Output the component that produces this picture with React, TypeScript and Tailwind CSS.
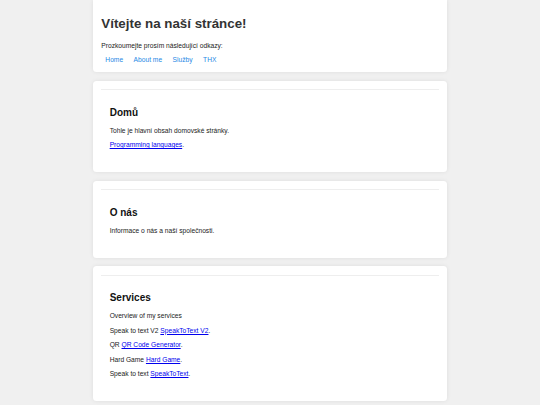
const Card = ({ title, children }: { title: string; children: React.ReactNode }) => (
    <div className="bg-white rounded-[3.5px] shadow-[0_0_4px_rgba(0,0,0,0.08)] p-[8.33px]">
        <hr className="border-t border-[#eeeeee]" />
        <section className="px-[8.33px] pt-[8.33px] pb-[15px]">
            <h2 className="mt-[8.3px] mb-[8.3px] text-[10px] leading-[1.15] font-bold text-[#111]">{title}</h2>
            <div className="flex flex-col gap-[6.9px]">{children}</div>
        </section>
    </div>
);

const Link = ({ children }: { children: React.ReactNode }) => (
    <a href="#" className="text-[#0000ee] underline">{children}</a>
);

const App = () => {
    const links = ['Home', 'About me', 'Služby', 'THX'];

    return (
        <div className="min-h-screen bg-[#f0f0f0] text-[6.67px] leading-[1.15] text-[#222]" style={{ fontFamily: '"Liberation Sans", Arial, sans-serif' }}>
            <div className="w-[354px] mx-auto flex flex-col gap-[8.8px] pb-[8px]">
                {/* hlavička */}
                <header className="bg-white rounded-b-[3.5px] shadow-[0_0_4px_rgba(0,0,0,0.08)] px-[8.33px] pt-[16.3px] pb-[8.33px]">
                    <h1 className="text-[13.33px] leading-[1.15] font-bold text-[#333]">Vítejte na naší stránce!</h1>
                    <p className="mt-[10.4px] text-[#222]">Prozkoumejte prosím následující odkazy:</p>
                    <nav className="flex gap-[10.5px] ml-[4px] mt-[6.3px]">
                        {links.map((l) => (
                            <a key={l} href="#" className="text-[#1e88e5]">{l}</a>
                        ))}
                    </nav>
                </header>

                <Card title="Domů">
                    <p>Tohle je hlavní obsah domovské stránky.</p>
                    <p><Link>Programming languages</Link>.</p>
                </Card>

                <Card title="O nás">
                    <p>Informace o nás a naší společnosti.</p>
                </Card>

                <Card title="Services">
                    <p>Overview of my services</p>
                    <p>Speak to text V2 <Link>SpeakToText V2</Link>.</p>
                    <p>QR <Link>QR Code Generator</Link>.</p>
                    <p>Hard Game <Link>Hard Game</Link>.</p>
                    <p>Speak to text <Link>SpeakToText</Link>.</p>
                </Card>
            </div>
        </div>
    );
};

export default App;
